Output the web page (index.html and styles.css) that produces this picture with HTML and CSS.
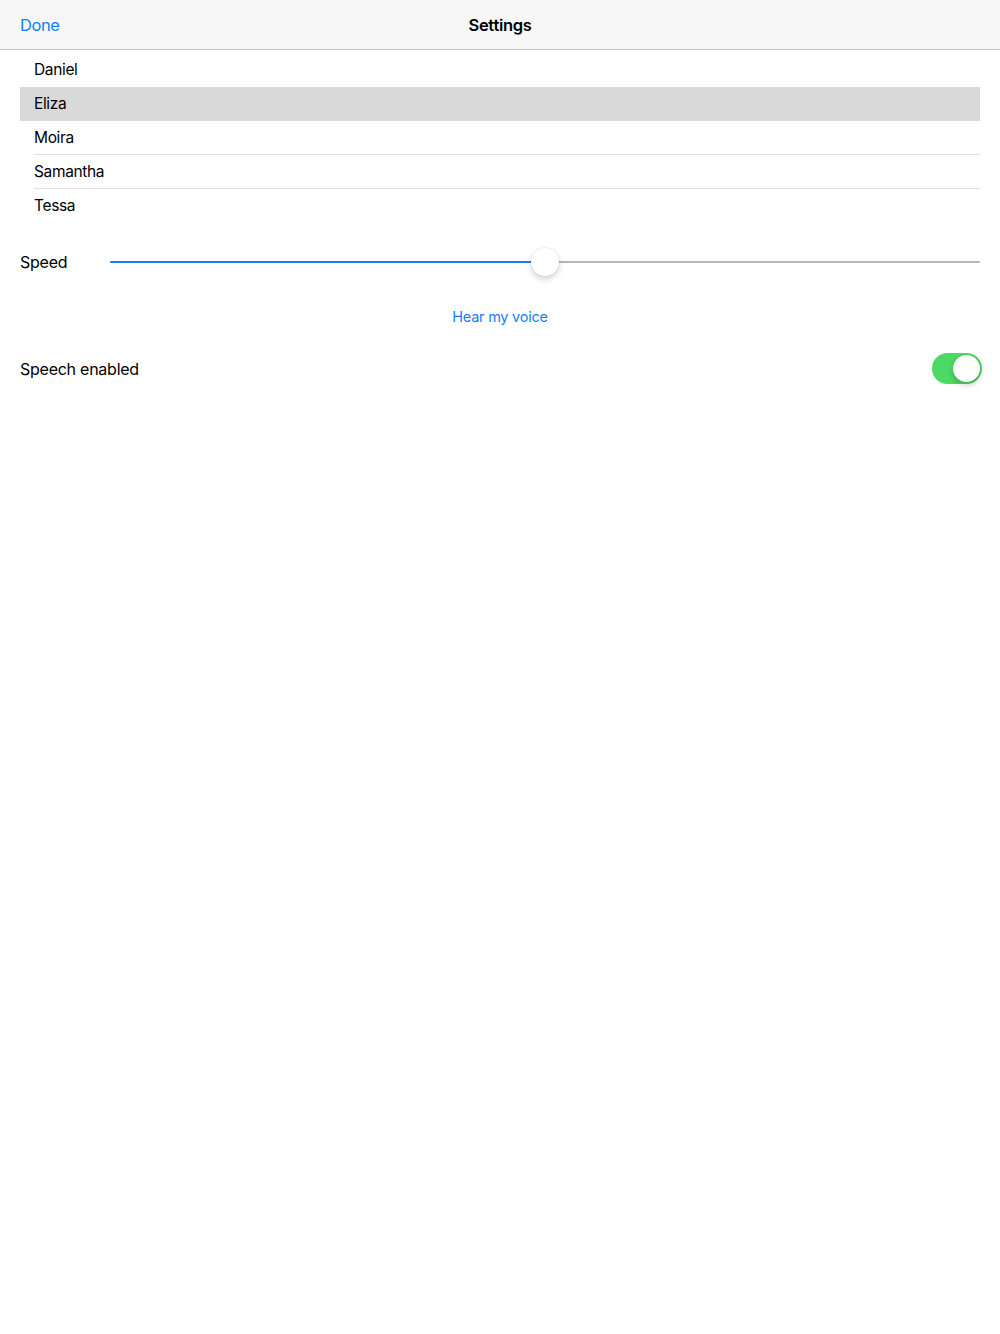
FILE: index.html
```html
<!DOCTYPE html>
<html>
<head>
<meta charset="utf-8">
<link rel="stylesheet" href="styles.css">
</head>
<body>
<header class="navbar">
  <span class="nav-btn">Done</span>
  <span class="nav-title">Settings</span>
</header>
<main class="content">
  <ul class="voices">
    <li class="voice"><span>Daniel</span></li>
    <li class="voice selected"><span>Eliza</span></li>
    <li class="voice"><span>Moira</span></li>
    <li class="voice"><span>Samantha</span></li>
    <li class="voice last"><span>Tessa</span></li>
  </ul>
  <div class="speed-row">
    <span class="label">Speed</span>
    <div class="slider">
      <div class="track-fill" style="width: 50%"></div>
      <div class="thumb"></div>
      <div class="track-rest"></div>
    </div>
  </div>
  <div class="hear-row"><span class="link">Hear my voice</span></div>
  <div class="toggle-row">
    <span class="label">Speech enabled</span>
    <div class="switch on"><div class="knob"></div></div>
  </div>
</main>
</body>
</html>
```
FILE: styles.css
```css
* { box-sizing: border-box; }
html, body { margin: 0; padding: 0; background: #fff; }
body {
  font-family: Inter, "Noto Sans", "Liberation Sans", sans-serif;
  color: #000;
  width: 1000px;
  height: 1334px;
}
.navbar {
  height: 50px;
  background: #f7f7f7;
  border-bottom: 1px solid #c9c9c9;
  position: relative;
  display: flex;
  align-items: center;
  padding: 0 20px;
}
.nav-btn { color: #147efb; font-size: 16.5px; letter-spacing: -0.4px; }
.nav-title {
  position: absolute;
  left: 0; right: 0;
  text-align: center;
  font-weight: 600;
  font-size: 16.5px;
  letter-spacing: -0.3px;
  pointer-events: none;
}
.content { padding: 3px 20px 0 20px; }
.voices { list-style: none; margin: 0; padding: 0; }
.voice {
  height: 34px;
  padding-left: 14px;
  font-size: 15.5px;
  letter-spacing: -0.35px;
  display: flex;
}
.voice span {
  flex: 1;
  display: flex;
  align-items: center;
  border-bottom: 1px solid #e0e0e0;
}
.voice.selected { background: #d9d9d9; }
.voice.selected span, .voice.last span, .voice:first-child span { border-bottom-color: transparent; }
.speed-row {
  display: flex;
  align-items: center;
  margin-top: 23px;
  height: 32px;
}
.label { font-size: 16px; letter-spacing: -0.25px; }
.speed-row .label { width: 90px; }
.slider {
  flex: 1;
  display: flex;
  align-items: center;
  height: 32px;
}
.track-fill { height: 2px; background: #147efb; border-radius: 1px; }
.track-rest { flex: 1; height: 2px; background: #b6b6b6; border-radius: 1px; }
.thumb {
  width: 28px; height: 28px;
  margin: 0 -14px;
  border-radius: 50%;
  background: #fff;
  box-shadow: 0 3px 6px rgba(0,0,0,0.18), 0 0 0 0.5px rgba(0,0,0,0.08);
  position: relative;
  z-index: 1;
}
.hear-row {
  display: flex;
  justify-content: center;
  margin-top: 28px;
  height: 20px;
  align-items: center;
}
.link { color: #147efb; font-size: 14.5px; letter-spacing: -0.25px; }
.toggle-row {
  display: flex;
  align-items: center;
  justify-content: space-between;
  margin-top: 27px;
  height: 31px;
  margin-right: -2px;
}
.switch {
  width: 50px; height: 31px;
  border-radius: 16px;
  background: #4cd964;
  position: relative;
}
.switch .knob {
  position: absolute;
  right: 2px; top: 2px;
  width: 27px; height: 27px;
  border-radius: 50%;
  background: #fff;
  box-shadow: 0 3px 6px rgba(0,0,0,0.2), 0 0 0 0.5px rgba(0,0,0,0.06);
}
```
